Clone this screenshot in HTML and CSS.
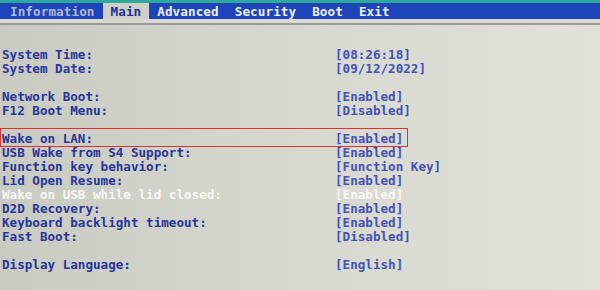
FILE: index.html
```html
<!DOCTYPE html>
<html>
<head>
<meta charset="utf-8">
<link rel="stylesheet" href="styles.css">
</head>
<body>
<div class="screen">
  <div class="topstrip"></div>
  <nav class="tabs">
    <span class="tab dim">Information</span>
    <span class="tab active">Main</span>
    <span class="tab">Advanced</span>
    <span class="tab">Security</span>
    <span class="tab">Boot</span>
    <span class="tab">Exit</span>
  </nav>
  <div class="subbar"></div>
  <div class="items">
    <div class="row"><span class="label">System Time:</span><span class="value">[08:26:18]</span></div>
    <div class="row"><span class="label">System Date:</span><span class="value">[09/12/2022]</span></div>
    <div class="row blank"></div>
    <div class="row"><span class="label">Network Boot:</span><span class="value">[Enabled]</span></div>
    <div class="row"><span class="label">F12 Boot Menu:</span><span class="value">[Disabled]</span></div>
    <div class="row blank"></div>
    <div class="row marked"><span class="label">Wake on LAN:</span><span class="value">[Enabled]</span></div>
    <div class="row"><span class="label">USB Wake from S4 Support:</span><span class="value">[Enabled]</span></div>
    <div class="row"><span class="label">Function key behavior:</span><span class="value">[Function Key]</span></div>
    <div class="row"><span class="label">Lid Open Resume:</span><span class="value">[Enabled]</span></div>
    <div class="row selected"><span class="label">Wake on USB while lid closed:</span><span class="value">[Enabled]</span></div>
    <div class="row"><span class="label">D2D Recovery:</span><span class="value">[Enabled]</span></div>
    <div class="row"><span class="label">Keyboard backlight timeout:</span><span class="value">[Enabled]</span></div>
    <div class="row"><span class="label">Fast Boot:</span><span class="value">[Disabled]</span></div>
    <div class="row blank"></div>
    <div class="row"><span class="label">Display Language:</span><span class="value">[English]</span></div>
  </div>
</div>
</body>
</html>
```
FILE: styles.css
```css
html, body {
  margin: 0;
  padding: 0;
}
body {
  width: 600px;
  height: 290px;
  overflow: hidden;
  font-family: "DejaVu Sans Mono", "Liberation Mono", monospace;
  font-weight: bold;
  font-size: 12.6px;
}
.screen {
  width: 600px;
  height: 290px;
  background: linear-gradient(90deg, #c9cac1 0%, #d6d7ce 45%, #e1e1d9 100%);
  display: flex;
  flex-direction: column;
}
.topstrip {
  height: 3px;
  background: #2fa89c;
}
.tabs {
  height: 16px;
  background: #1d44b8;
  display: flex;
  padding-left: 2px;
  line-height: 17px;
}
.tab {
  padding: 0 8px;
  color: #eef0fa;
  letter-spacing: 0.1px;
}
.tab.dim {
  color: #aeb8d6;
}
.tab.active {
  background: #cfcfc7;
  color: #23309a;
}
.subbar {
  height: 4px;
  background: #d9d9d2;
  border-bottom: 2px solid #9c9c96;
}
.items {
  padding: 23px 0 0 2px;
  display: flex;
  flex-direction: column;
}
.row {
  height: 14px;
  line-height: 14px;
  display: grid;
  grid-template-columns: 333px auto;
  position: relative;
  white-space: pre;
}
.label {
  color: #28359a;
}
.value {
  color: #4452b4;
}
.row.selected .label,
.row.selected .value {
  color: #f8f8f4;
}
.row.marked::after {
  content: "";
  position: absolute;
  left: -2px;
  top: -4px;
  width: 406px;
  height: 17px;
  border: 1.5px solid #d83232;
}
```
